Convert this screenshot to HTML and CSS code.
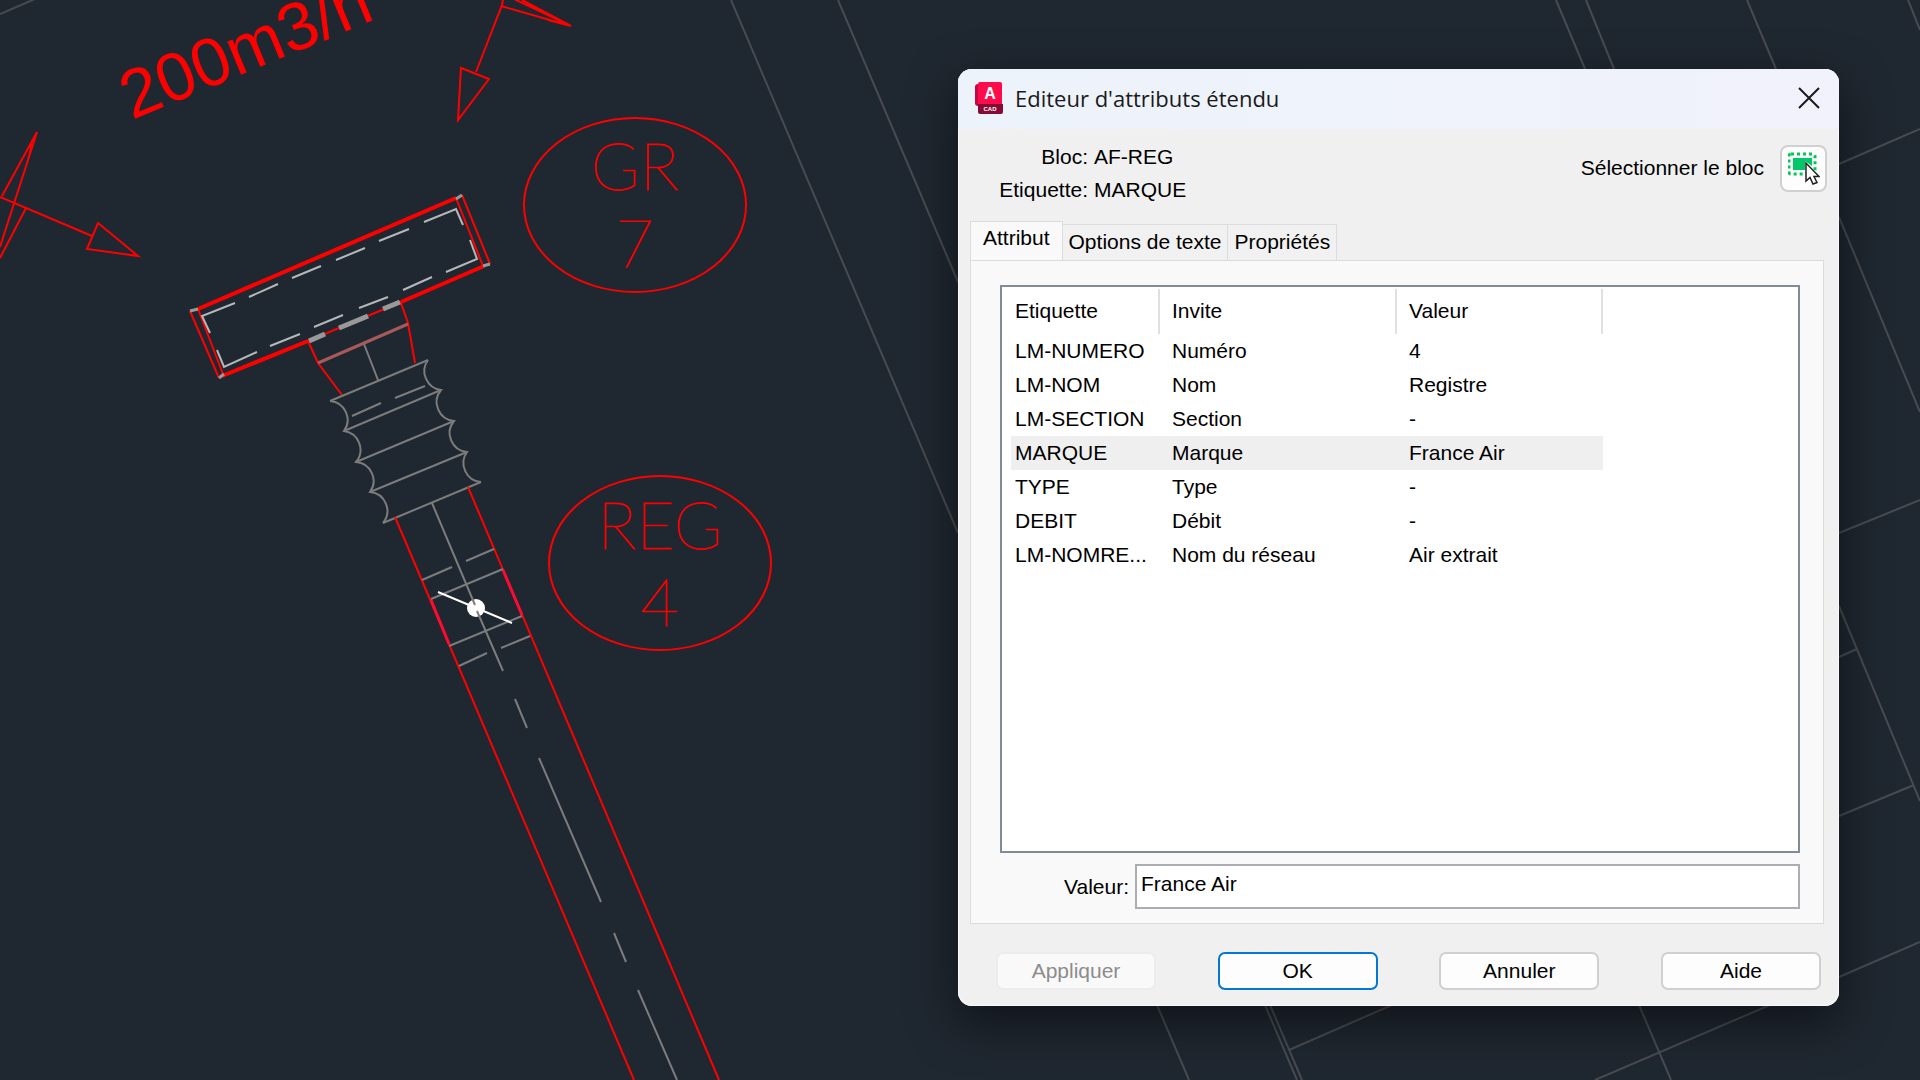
FILE: index.html
```html
<!DOCTYPE html>
<html lang="fr">
<head>
	<meta charset="UTF-8">
	<title>Editeur d'attributs étendu</title>
	<link rel="stylesheet" href="styles.css">
</head>
<body>
<svg class="drawing" viewBox="0 0 1920 1080" preserveAspectRatio="xMinYMin slice">
	<!-- background plan -->
	<g class="plan">
		<path d="M0 14L35 -1M731 0L958 533M838 0L958 282M1556 0L1585 69M1586 0L1614 69M1747 0L1776 69M1908 0L1920 30"/>
		<path d="M1839 164L1920 129M1839 217L1920 412M1839 533L1920 500M1839 606L1920 801M1839 657L1857 649M1839 816L1914 785M1839 977L1920 942"/>
		<path d="M1157 1005L1189 1080M1265 1005L1297 1080M1270 1005L1302 1080M1392 1005L1289 1050M1639 1005L1671 1080M1770 1005L1595 1080"/>
	</g>

	<!-- air flow arrows -->
	<g class="red">
		<path d="M0 197L92 236M98 223L138 256L87 249ZM2 196L37 132L0 247M32 144L28 160M26 208L0 258"/>
		<path d="M503 0L502 5L476 72M461 68L489 79L458 120ZM501 6L571 26L514 -1M571 26L522 0M571 26L548 20"/>
	</g>
	<text class="flow" transform="translate(132 120) rotate(-22.5)">200m3/h</text>

	<!-- grille -->
	<g class="red">
		<path d="M190 311L219 378M198 309L223 374M462 195L490 264M456 198L483 266M308 341L401 302"/>
		<path class="thick" d="M198 309L456 198M222 376L308 341M401 302L484 266"/>
		<path d="M308 341L318 363L342 395M401 303L408 323L415 363"/>
	</g>
	<path class="corner" d="M190 311L198 309M456 199L462 195M483 266L490 264M219 378L224 374"/>
	<path class="dash" d="M210 333L202 316L235 303M249 297L278 284M292 278L321 266M336 260L365 248M379 241L409 229M424 222L456 209L463 225"/>
	<path class="dash" d="M217 350L224 367L257 352M270 346L300 334M314 327L343 315M359 308L388 297M403 290L432 277M446 272L477 259L470 240"/>
	<path class="joint" d="M309 341L325 334M339 328L368 316M383 309L400 302"/>
	<path class="collar" d="M318 363L408 324"/>

	<!-- flexible duct -->
	<g class="grey">
		<path d="M364 344L378 380M330 401L428 360M344 431L441 390M356 462L454 421M370 492L467 452M383 523L481 482"/>
		<path d="M330 401A19 19 0 0 1 344 431A19 19 0 0 1 356 462A19 19 0 0 1 370 492A19 19 0 0 1 383 523"/>
		<path d="M428 360A19 19 0 0 0 441 390A19 19 0 0 0 454 421A19 19 0 0 0 467 452A19 19 0 0 0 481 482"/>
		<path d="M352 416L381 403M395 398L425 386"/>
	</g>

	<!-- rigid duct and damper -->
	<path class="red" d="M395 517L634 1080M468 487L719 1080"/>
	<path class="damper-side" d="M431 600L449 644M503 570L522 615"/>
	<g class="grey">
		<path d="M422 580L452 567M466 561L494 549M431 599L503 569M449 646L522 616M459 666L487 653M501 648L530 636"/>
	</g>
	<path class="blade" d="M438 592L512 623"/>
	<circle class="axle" cx="476" cy="608" r="9"/>
	<path class="grey" d="M432 503L475 605M477 611L503 671M515 699L527 728M539 758L601 902M614 933L626 962M638 990L677 1080"/>

	<!-- tags -->
	<g class="red">
		<ellipse cx="635" cy="205" rx="111" ry="87"/>
		<ellipse cx="660" cy="563" rx="111" ry="87"/>
	</g>
	<g class="tag">
		<text x="635" y="190">GR</text>
		<text x="635" y="267">7</text>
		<text x="660" y="549">REG</text>
		<text x="660" y="626">4</text>
	</g>
</svg>

<form class="dialog" onsubmit="return false">
	<header class="titlebar">
		<svg class="app-icon" width="28" height="32" viewBox="0 0 28 32">
			<rect x="0" y="2" width="20" height="22" rx="3" fill="#c4093c"/>
			<rect x="3" y="0" width="24" height="28" rx="2" fill="#ff0a4b"/>
			<path d="M3 22H28V30a2 2 0 0 1-2 2H5a2 2 0 0 1-2-2Z" fill="#860a33"/>
			<text class="app-letter" x="15" y="17">A</text>
			<text class="app-name" x="15" y="29">CAD</text>
		</svg>
		<h1>Editeur d'attributs étendu</h1>
		<button type="button" class="close" aria-label="Fermer">
			<svg width="22" height="22" viewBox="0 0 22 22"><path d="M1 1L21 21M21 1L1 21"/></svg>
		</button>
	</header>

	<section class="block-info">
		<dl>
			<dt>Bloc:</dt><dd>AF-REG</dd>
			<dt>Etiquette:</dt><dd>MARQUE</dd>
		</dl>
		<label for="pick">Sélectionner le bloc</label>
		<button type="button" class="pick" id="pick">
			<svg width="32" height="34" viewBox="0 0 32 34">
				<rect x="1" y="2" width="26" height="20" rx="2" fill="none" stroke="#00c853" stroke-width="3" stroke-dasharray="3 3"/>
				<path d="M5 6H24V14L17 9V18H5Z" fill="#00c86a"/>
				<path d="M18 11V29L22 25.500L25 32L29 30.500L26 24.500H31Z" fill="#fff" stroke="#222" stroke-width="1.500"/>
			</svg>
		</button>
	</section>

	<nav class="tabs">
		<button type="button" class="on">Attribut</button>
		<button type="button">Options de texte</button>
		<button type="button">Propriétés</button>
	</nav>

	<section class="panel">
		<div class="list">
			<table>
				<thead>
					<tr><th>Etiquette</th><th>Invite</th><th>Valeur</th></tr>
				</thead>
				<tbody>
					<tr><td>LM-NUMERO</td><td>Numéro</td><td>4</td></tr>
					<tr><td>LM-NOM</td><td>Nom</td><td>Registre</td></tr>
					<tr><td>LM-SECTION</td><td>Section</td><td>-</td></tr>
					<tr class="selected"><td>MARQUE</td><td>Marque</td><td>France Air</td></tr>
					<tr><td>TYPE</td><td>Type</td><td>-</td></tr>
					<tr><td>DEBIT</td><td>Débit</td><td>-</td></tr>
					<tr><td>LM-NOMRE...</td><td>Nom du réseau</td><td>Air extrait</td></tr>
				</tbody>
			</table>
		</div>
		<div class="field">
			<label for="value">Valeur:</label>
			<input type="text" id="value" value="France Air">
		</div>
	</section>

	<footer class="actions">
		<button type="button" disabled>Appliquer</button>
		<button type="submit" class="default">OK</button>
		<button type="button">Annuler</button>
		<button type="button">Aide</button>
	</footer>
</form>
</body>
</html>
```
FILE: styles.css
```css
* {
    box-sizing: border-box;
    margin: 0;
    padding: 0;
}

body {
    height: 100vh;
    overflow: hidden;
    background: #1f2730;
    font-family: "Liberation Sans", Arial, sans-serif;
    font-size: 21px;
    color: #000;
}

button, input {
    font: inherit;
    color: inherit;
}

/* drawing */
.drawing {
    display: block;
    width: 100%;
    height: 100%;
    fill: none;
    stroke-width: 2;
}

.plan {
    stroke: #484c50;
}

.red {
    stroke: #f00;
}

.thick {
    stroke-width: 4;
}

.grey {
    stroke: #7c7c7c;
}

.dash {
    stroke: #b4b8ba;
}

.corner {
    stroke: #999;
    stroke-width: 3;
}

.joint {
    stroke: #999;
    stroke-width: 5;
}

.collar {
    stroke: #a85a5a;
    stroke-width: 3;
}

.damper-side {
    stroke: #ff0a30;
    stroke-width: 3;
}

.blade {
    stroke: #fff;
}

.axle {
    fill: #fff;
}

.flow {
    fill: #f00;
    font-size: 68px;
}

.tag {
    fill: #f00;
    stroke: #f00;
    stroke-width: 1;
    font-family: Lato, sans-serif;
    font-size: 66px;
    font-weight: 100;
    text-anchor: middle;
}

/* dialog window */
.dialog {
    position: absolute;
    top: 69px;
    right: 81px;
    bottom: 74px;
    left: 958px;
    display: flex;
    flex-direction: column;
    border-radius: 14px;
    background: #f0f0f0;
    box-shadow: inset 0 0 0 1px #fafafa, 0 16px 48px rgba(0, 0, 0, .5);
    overflow: hidden;
}

.titlebar {
    display: flex;
    align-items: center;
    gap: 12px;
    height: 60px;
    padding: 0 15px 2px 17px;
    background: linear-gradient(90deg, #edf3fa, #f1f2fb);
}

.titlebar h1 {
    flex: 1;
    font-family: "Open Sans", "Noto Sans", sans-serif;
    font-size: 22px;
    font-weight: 400;
    color: #1a1a1a;
}

.app-letter, .app-name {
    fill: #fff;
    font-weight: bold;
    text-anchor: middle;
}

.app-letter {
    font-size: 16px;
}

.app-name {
    font-size: 6px;
}

.close {
    display: flex;
    padding: 4px;
    border: 0;
    background: none;
}

.close svg {
    stroke: #1a1a1a;
    stroke-width: 2;
}

.block-info {
    display: flex;
    align-items: flex-start;
    height: 92px;
    padding: 11px 12px 0;
    line-height: 33px;
}

.block-info dl {
    flex: 1;
    display: grid;
    grid-template-columns: 118px 1fr;
    column-gap: 6px;
}

.block-info dt {
    text-align: right;
}

.block-info label {
    margin-right: 16px;
    padding-top: 11px;
}

.pick {
    display: flex;
    align-items: center;
    justify-content: center;
    width: 47px;
    height: 47px;
    margin-top: 5px;
    border: 2px solid #d0d0d0;
    border-radius: 8px;
    background: #fdfdfd;
}

.tabs {
    display: flex;
    align-items: flex-end;
    height: 40px;
    margin: 0 12px -1px;
}

.tabs button {
    height: 37px;
    padding: 0 6px 2px;
    border: 1px solid #dcdcdc;
    border-left: 0;
    background: #f1f1f1;
    line-height: 32px;
}

.tabs .on {
    height: 40px;
    padding: 0 12px 8px;
    border-left: 1px solid #dcdcdc;
    border-bottom: 0;
    background: #f9f9f9;
}

.panel {
    flex: 1;
    display: flex;
    flex-direction: column;
    gap: 11px;
    margin: 0 15px 0 12px;
    padding: 24px 23px 14px 29px;
    border: 1px solid #dcdcdc;
    background: #f9f9f9;
}

.list {
    flex: 1;
    padding-left: 9px;
    border: 2px solid #828b96;
    background: #fff;
    overflow: hidden;
}

.list table {
    width: 592px;
    table-layout: fixed;
    border-collapse: collapse;
}

.list th {
    height: 47px;
    padding-left: 12px;
    background: linear-gradient(#e0e0e0, #e0e0e0) right bottom / 2px 45px no-repeat;
    font-weight: 400;
    text-align: left;
}

.list th:nth-child(1) {
    width: 149px;
    padding-left: 4px;
}

.list th:nth-child(2) {
    width: 237px;
}

.list td {
    height: 34px;
    padding-left: 12px;
    line-height: 34px;
    white-space: nowrap;
}

.list td:first-child {
    padding-left: 4px;
}

.selected {
    background: #efefef;
}

.field {
    display: flex;
    align-items: center;
}

.field label {
    width: 135px;
    padding-right: 6px;
    text-align: right;
}

.field input {
    flex: 1;
    height: 45px;
    padding: 0 4px 6px;
    border: 2px solid #abadb3;
    background: #fff;
}

.actions {
    display: flex;
    justify-content: space-between;
    padding: 28px 18px 16px 38px;
}

.actions button {
    width: 160px;
    height: 38px;
    border: 2px solid #d0d0d0;
    border-radius: 7px;
    background: #fdfdfd;
    line-height: 32px;
}

.actions .default {
    border-color: #0078d4;
}

.actions button:disabled {
    border-color: #ececec;
    background: #f9f9f9;
    color: #8c8c8c;
}
```
